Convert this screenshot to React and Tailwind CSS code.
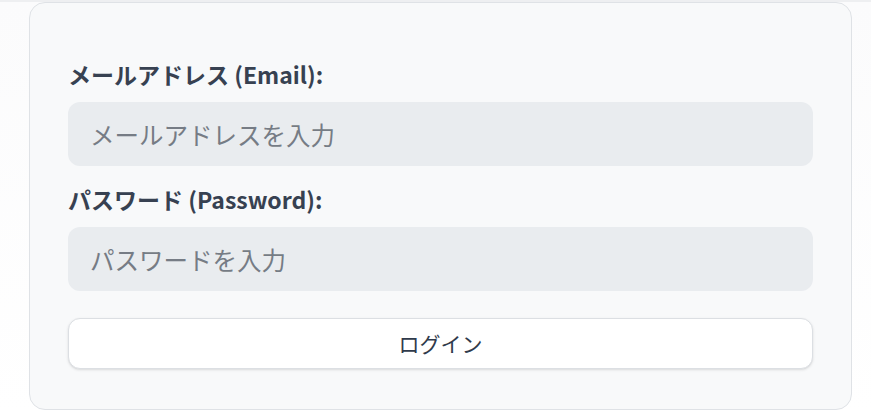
import React from "react";

const font = {
  fontFamily: '"Noto Sans CJK JP", "Noto Sans", sans-serif',
};

const Field = ({ label, placeholder, type }) => (
  <div className="flex flex-col">
    <label className="text-[23px] leading-[32px] font-bold text-[#374151] mb-[12px]">
      {label}
    </label>
    <input
      type={type}
      placeholder={placeholder}
      className="h-[64px] w-full rounded-[12px] bg-[#e9ecef] px-[22px] text-[24.5px] text-[#374151] placeholder:text-[#767c85] outline-none"
    />
  </div>
);

export default function App() {
  return (
    <div
      className="w-[871px] h-[413px] overflow-hidden bg-gradient-to-b from-[#fbfbfc] to-white"
      style={font}
    >
      <div className="h-[2px] bg-[#eeeff1]" />
      <div className="ml-[29px] w-[823px] rounded-[16px] border border-[#dfe2e6] bg-[#f8f9fa] px-[38px] pt-[55px] pb-[40px]">
        <div className="flex flex-col gap-[17px]">
          <Field
            label="メールアドレス (Email):"
            placeholder="メールアドレスを入力"
            type="email"
          />
          <Field
            label="パスワード (Password):"
            placeholder="パスワードを入力"
            type="password"
          />
        </div>
        <button className="mt-[27px] h-[51px] w-full rounded-[12px] border border-[#dcdfe3] bg-white text-[21px] text-[#2f3a4b] shadow-sm">
          ログイン
        </button>
      </div>
    </div>
  );
}
